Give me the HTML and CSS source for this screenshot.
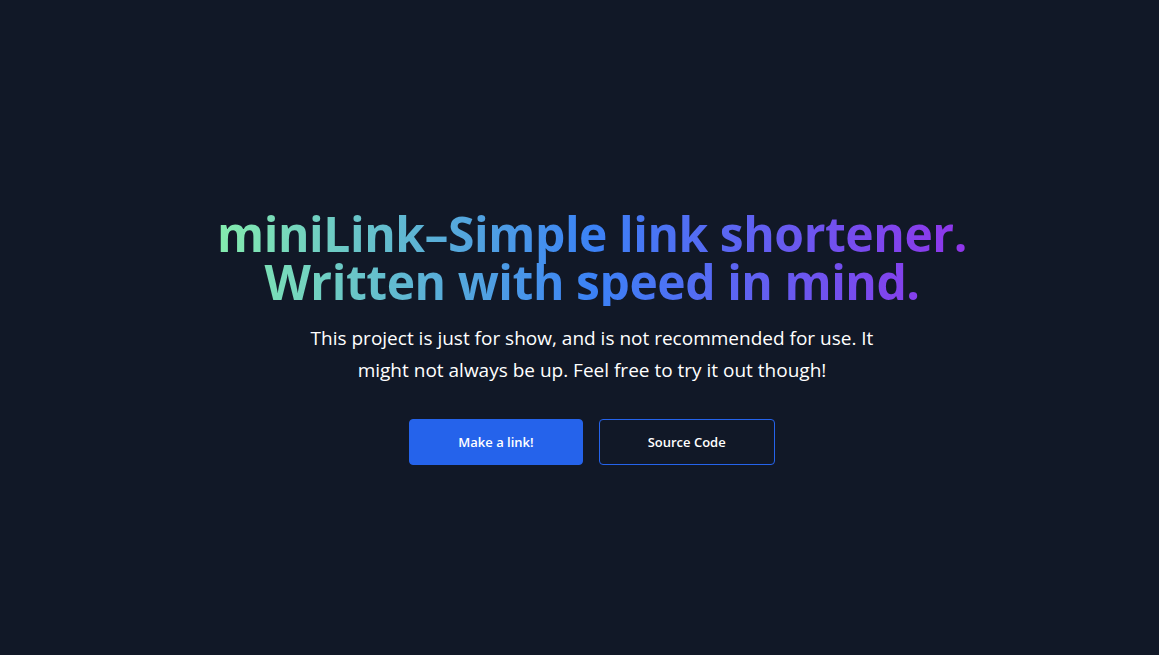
FILE: index.html
```html
<!DOCTYPE html>
<html lang="en">
<head>
<meta charset="utf-8">
<title>miniLink</title>
<link rel="stylesheet" href="styles.css">
</head>
<body>
<section class="hero">
  <div class="hero-inner">
    <h1 class="title">miniLink–Simple link shortener.<span class="line2">Written with speed in mind.</span></h1>
    <p class="lead">This project is just for show, and is not recommended for use. It might not always be up. Feel free to try it out though!</p>
    <div class="actions">
      <a class="btn btn-primary" href="#">Make a link!</a>
      <a class="btn btn-outline" href="#">Source Code</a>
    </div>
  </div>
</section>
</body>
</html>
```

FILE: styles.css
```css
* { box-sizing: border-box; }
html, body { margin: 0; padding: 0; }
body {
  background: #111827;
  color: #fff;
  font-family: "Open Sans", "Noto Sans", sans-serif;
}
.hero {
  min-height: 100vh;
  display: flex;
  align-items: center;
  justify-content: center;
  padding: 19px 0 0 25px;
}
.hero-inner {
  width: 768px;
  text-align: center;
}
.title {
  margin: 0;
  font-size: 48px;
  line-height: 48px;
  font-weight: 700;
  letter-spacing: -0.45px;
  background-image: linear-gradient(to right, #86efac, #3b82f6, #9333ea);
  -webkit-background-clip: text;
  background-clip: text;
  color: transparent;
}
.line2 { display: block; }
.lead {
  margin: 16px auto 0;
  max-width: 576px;
  font-size: 19px;
  line-height: 32.5px;
}
.actions {
  margin-top: 32px;
  display: flex;
  justify-content: center;
  gap: 16px;
}
.btn {
  display: block;
  padding: 12px 48px;
  border: 1px solid #2563eb;
  border-radius: 4px;
  font-size: 13px;
  line-height: 20px;
  font-weight: 600;
  color: #fff;
  text-decoration: none;
}
.btn-primary { background: #2563eb; }
.btn-outline { background: transparent; }
```
